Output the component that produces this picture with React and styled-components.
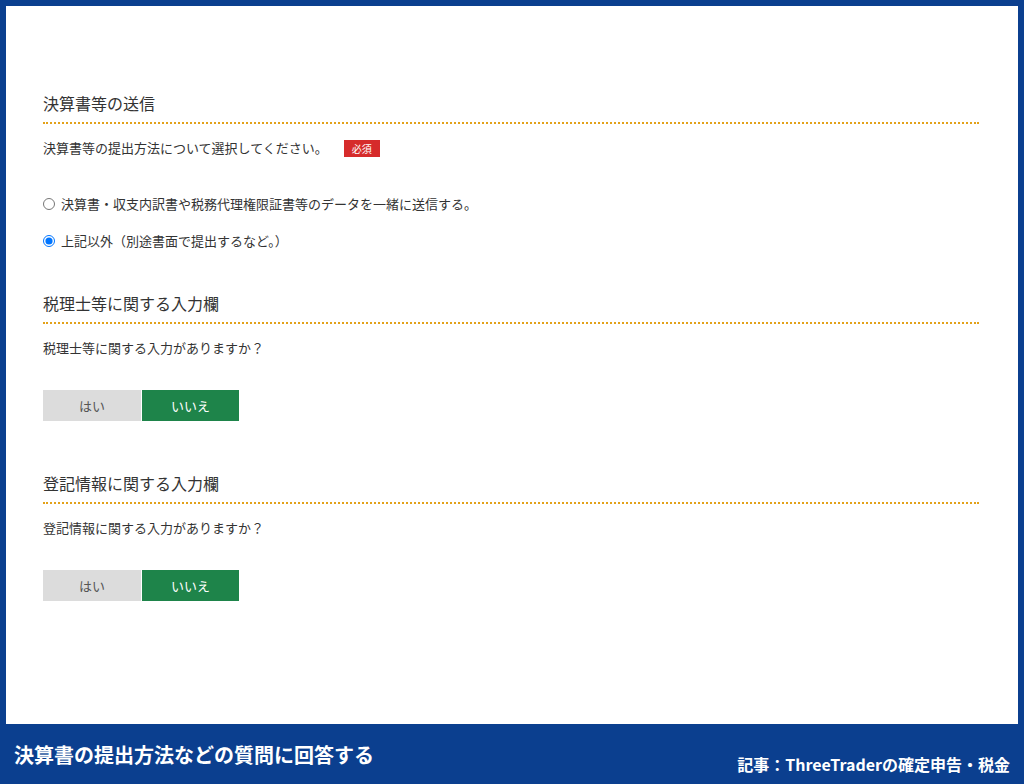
import styled, { createGlobalStyle } from 'styled-components';

const Global = createGlobalStyle`
  html, body { margin: 0; padding: 0; }
  body { font-family: "Noto Sans CJK JP", "Noto Sans", sans-serif; color: #333; }
`;

const Frame = styled.div`
  width: 1024px;
  height: 784px;
  background: #0b3f8f;
  display: flex;
  flex-direction: column;
  box-sizing: border-box;
  padding: 6px 6px 0;
`;

const Panel = styled.div`
  background: #fff;
  height: 718px;
  box-sizing: border-box;
  padding: 86px 39px 0 37px;
`;

const Footer = styled.div`
  flex: 1;
  display: flex;
  justify-content: space-between;
  align-items: flex-start;
  color: #fff;
  font-weight: bold;
  padding: 0 8px 0 8px;
`;

const FooterTitle = styled.div`
  font-size: 20px;
  margin-top: 16px;
`;

const FooterRight = styled.div`
  font-size: 16px;
  margin-top: 28px;
`;

const Heading = styled.h2`
  margin: 0;
  font-size: 16px;
  font-weight: normal;
  color: #333;
  padding-bottom: 8px;
  border-bottom: 2px dotted #e3a21a;
  line-height: 22px;
`;

const Question = styled.div`
  font-size: 13px;
  margin-top: 14px;
  display: flex;
  align-items: center;
  gap: 16px;
  line-height: 20px;
`;

const Badge = styled.span`
  background: #d62b2b;
  color: #fff;
  font-size: 10px;
  padding: 1px 8px;
  line-height: 15px;
`;

const Radios = styled.div`
  margin-top: 36px;
  display: flex;
  flex-direction: column;
  gap: 17px;
  font-size: 13px;
`;

const RadioRow = styled.label`
  display: flex;
  align-items: center;
  gap: 6px;
  line-height: 20px;
  input { margin: 0; width: 12px; height: 12px; }
`;

const Toggle = styled.div`
  display: flex;
  gap: 1px;
  margin-top: 32px;
`;

const ToggleBtn = styled.div`
  width: ${p => (p.$active ? '97px' : '98px')};
  height: 31px;
  display: flex;
  align-items: center;
  justify-content: center;
  font-size: 13px;
  background: ${p => (p.$active ? '#1e844a' : '#dcdcdc')};
  color: ${p => (p.$active ? '#fff' : '#555')};
`;

const Section = styled.div`
  margin-top: ${p => p.$top}px;
`;

export default function App() {
  return (
    <Frame>
      <Global />
      <Panel>
        <Heading>決算書等の送信</Heading>
        <Question>
          決算書等の提出方法について選択してください。
          <Badge>必須</Badge>
        </Question>
        <Radios>
          <RadioRow>
            <input type="radio" name="r" />
            決算書・収支内訳書や税務代理権限証書等のデータを一緒に送信する。
          </RadioRow>
          <RadioRow>
            <input type="radio" name="r" defaultChecked />
            上記以外（別途書面で提出するなど。）
          </RadioRow>
        </Radios>
        <Section $top={41}>
          <Heading>税理士等に関する入力欄</Heading>
          <Question>税理士等に関する入力がありますか？</Question>
          <Toggle>
            <ToggleBtn>はい</ToggleBtn>
            <ToggleBtn $active>いいえ</ToggleBtn>
          </Toggle>
        </Section>
        <Section $top={51}>
          <Heading>登記情報に関する入力欄</Heading>
          <Question>登記情報に関する入力がありますか？</Question>
          <Toggle>
            <ToggleBtn>はい</ToggleBtn>
            <ToggleBtn $active>いいえ</ToggleBtn>
          </Toggle>
        </Section>
      </Panel>
      <Footer>
        <FooterTitle>決算書の提出方法などの質問に回答する</FooterTitle>
        <FooterRight>記事：ThreeTraderの確定申告・税金</FooterRight>
      </Footer>
    </Frame>
  );
}
